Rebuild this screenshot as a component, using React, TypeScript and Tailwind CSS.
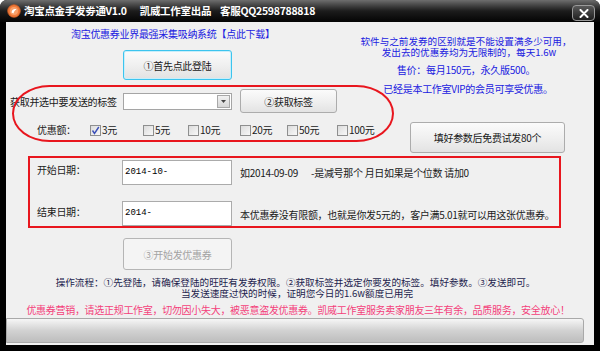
import React from "react";

const FONT = {
  fontFamily: '"Noto Sans CJK SC", "Noto Sans", "Liberation Sans", sans-serif',
};

const amounts = [
  { label: "3元", checked: true, w: "w-[53px]" },
  { label: "5元", checked: false, w: "w-[45px]" },
  { label: "10元", checked: false, w: "w-[52px]" },
  { label: "20元", checked: false, w: "w-[47px]" },
  { label: "50元", checked: false, w: "w-[50px]" },
  { label: "100元", checked: false, w: "w-[44px]" },
];

function CheckBox({ checked }: { checked: boolean }) {
  return (
    <div className="w-[11px] h-[11px] border border-[#8e8f8f] bg-gradient-to-br from-[#dcdcdc] to-[#f8f8f8] flex items-center justify-center shrink-0">
      {checked && (
        <svg width="9" height="9" viewBox="0 0 9 9">
          <path d="M1.5 4.5 L3.5 7.5 L7.8 1" stroke="#3b4fb8" strokeWidth="1.4" fill="none" />
        </svg>
      )}
    </div>
  );
}

const MONO = { fontFamily: '"Liberation Mono", "DejaVu Sans Mono", monospace' };

export default function App() {
  return (
    <div
      className="w-[600px] h-[351px] bg-black rounded-t-[7px] flex flex-col overflow-hidden"
      style={FONT}
    >
      {/* Title bar */}
      <div className="h-[22px] shrink-0 flex items-center pl-[7px] pr-[5px] bg-gradient-to-b from-[#6e6e6e] via-[#1c1c1c] to-[#050505]">
        <svg width="14" height="14" viewBox="0 0 14 14" className="shrink-0">
          <circle cx="7" cy="7" r="6.3" fill="#f07a3a" stroke="#c85a22" strokeWidth="0.8" />
          <circle cx="7" cy="7" r="4" fill="#f7a06a" />
          <path d="M4.5 8.5 C5 5, 8 4.5, 9.5 5.5 C8 6, 7 7.5, 6.5 9.5 Z" fill="#ffffff" />
        </svg>
        <span className="ml-[3px] text-white font-bold text-[10.5px] leading-[12px] tracking-[-0.3px] whitespace-nowrap">
          淘宝点金手发劵通V1.0
        </span>
        <span className="ml-[13px] text-white font-bold text-[10.5px] leading-[12px] tracking-[-0.3px] whitespace-nowrap">
          凯威工作室出品
        </span>
        <span className="ml-[9px] text-white font-bold text-[10.5px] leading-[12px] tracking-[-0.3px] whitespace-nowrap">
          客服QQ2598788818
        </span>
        <div className="ml-auto mt-[4px] w-[23px] h-[16px] rounded-[4px] border border-[#9a9a9a] bg-gradient-to-b from-[#5a5a5a] to-[#202020] flex items-center justify-center">
          <svg width="10" height="9" viewBox="0 0 10 9">
            <path d="M1.5 1 L8.5 8 M8.5 1 L1.5 8" stroke="#ffffff" strokeWidth="2" strokeLinecap="round" />
          </svg>
        </div>
      </div>

      {/* Client area */}
      <div className="mx-[6px] h-[323px] shrink-0 bg-[#f0f0f0] flex flex-col">
        {/* Top section */}
        <div className="flex h-[131px]">
          {/* Left column */}
          <div className="w-[340px] shrink-0 flex flex-col">
            <div className="mt-[6px] pl-[65px] text-[10px] leading-[12px] tracking-[-0.3px] text-[#2020e0] whitespace-nowrap">
              淘宝优惠券业界最强采集吸纳系统【点此下载】
            </div>
            <div className="mt-[10px] ml-[117px] w-[109px] h-[30px] rounded-[3px] border border-[#3cc4ee] bg-gradient-to-b from-[#fbfbfb] via-[#f0f0f0] to-[#e2e2e2] flex items-center justify-center text-[10px] tracking-[-0.3px] text-[#1a1a1a] shadow-[inset_0_0_0_1px_#c8eefa]">
              ①首先点此登陆
            </div>
            {/* Ellipse region */}
            <div className="relative mt-[5px] ml-[4px] w-[384px] h-[57px] pt-[4px]">
              <div className="flex items-center h-[24px]">
                <div className="w-[113px] text-[10px] tracking-[-0.3px] text-[#1a1a1a] whitespace-nowrap">
                  获取并选中要发送的标签
                </div>
                <div className="w-[109px] h-[17px] border border-[#a5a5a5] bg-white flex items-center justify-end pr-[1px]">
                  <div className="w-[13px] h-[13px] border border-[#a8a8a8] bg-gradient-to-b from-[#f2f2f2] to-[#d6d6d6] flex items-center justify-center">
                    <svg width="5" height="3" viewBox="0 0 5 3">
                      <path d="M0 0 L5 0 L2.5 3 Z" fill="#444" />
                    </svg>
                  </div>
                </div>
                <div className="ml-[8px] w-[97px] h-[24px] rounded-[3px] border border-[#acacac] bg-gradient-to-b from-[#fbfbfb] via-[#f0f0f0] to-[#e3e3e3] flex items-center justify-center text-[10px] tracking-[-0.3px] text-[#1a1a1a]">
                  ②获取标签
                </div>
              </div>
              <div className="mt-[11px] flex items-center h-[12px] pl-[27px]">
                <div className="w-[53px] text-[10px] leading-[12px] tracking-[-0.3px] text-[#1a1a1a] whitespace-nowrap">
                  优惠额：
                </div>
                {amounts.map((a) => (
                  <div key={a.label} className={`${a.w} flex items-center shrink-0`}>
                    <CheckBox checked={a.checked} />
                    <span className="ml-[1px] text-[10px] leading-[12px] tracking-[-0.3px] text-[#1a1a1a] whitespace-nowrap">
                      {a.label}
                    </span>
                  </div>
                ))}
              </div>
              <div className="absolute left-[2px] top-0 w-[382px] h-[57px] border-2 border-[#e8161e] rounded-[38px/29px] pointer-events-none" />
            </div>
          </div>
          {/* Right column */}
          <div className="flex-1 flex flex-col pr-[8px]">
            <div className="mt-[14px] text-center text-[9.6px] leading-[11px] text-[#2020e0] whitespace-nowrap">
              软件与之前发券的区别就是不能设置满多少可用，
            </div>
            <div className="text-center text-[9.6px] leading-[11px] text-[#2020e0] whitespace-nowrap pl-[6px]">
              发出去的优惠券均为无限制的，每天1.6w
            </div>
            <div className="mt-[7px] text-center text-[10px] leading-[10px] tracking-[-0.3px] text-[#2020e0] whitespace-nowrap">
              售价：每月150元，永久版500。
            </div>
            <div className="mt-[9px] text-center text-[10px] leading-[10px] tracking-[-0.3px] text-[#2020e0] whitespace-nowrap pl-[4px]">
              已经是本工作室VIP的会员可享受优惠。
            </div>
            <div className="mt-[28px] ml-[64px] w-[155px] h-[31px] rounded-[3px] border border-[#acacac] bg-gradient-to-b from-[#fbfbfb] via-[#f0f0f0] to-[#e3e3e3] flex items-center justify-center text-[10px] tracking-[-0.3px] text-[#1a1a1a] whitespace-nowrap">
              填好参数后免费试发80个
            </div>
          </div>
        </div>

        {/* Date box */}
        <div className="mt-[3px] ml-[22px] w-[533px] h-[72px] border-2 border-[#e8161e] flex flex-col pl-[7px]">
          <div className="mt-[2px] flex items-start h-[25px]">
            <div className="mt-[4px] w-[85px] text-[10px] leading-[12px] tracking-[-0.3px] text-[#1a1a1a]">开始日期：</div>
            <div className="w-[110px] h-[25px] border border-[#ababab] bg-white flex items-center pl-[2px] text-black" style={MONO}>
              <span className="text-[9px]">2014-10-</span>
            </div>
            <div className="mt-[7px] ml-[8px] text-[10px] leading-[12px] tracking-[-0.3px] text-[#1a1a1a] whitespace-nowrap">
              如2014-09-09
            </div>
            <div className="mt-[7px] ml-[13px] text-[10px] leading-[12px] tracking-[-0.3px] text-[#1a1a1a] whitespace-nowrap">
              -是减号那个 月日如果是个位数 请加0
            </div>
          </div>
          <div className="mt-[16px] flex items-start h-[25px]">
            <div className="mt-[5px] w-[85px] text-[10px] leading-[12px] tracking-[-0.3px] text-[#1a1a1a]">结束日期：</div>
            <div className="w-[110px] h-[25px] border border-[#ababab] bg-white flex items-center pl-[2px] text-black" style={MONO}>
              <span className="text-[9px]">2014-</span>
            </div>
            <div className="mt-[8px] ml-[8px] text-[10px] leading-[12px] tracking-[-0.3px] text-[#1a1a1a] whitespace-nowrap">
              本优惠券没有限额，也就是你发5元的，客户满5.01就可以用这张优惠券。
            </div>
          </div>
        </div>

        {/* Start button (disabled) */}
        <div className="mt-[10px] ml-[117px] w-[109px] h-[32px] rounded-[3px] border border-[#b5b5b5] bg-[#f4f4f4] flex items-center justify-center text-[10px] tracking-[-0.3px] text-[#a3a3a3]">
          ③开始发优惠券
        </div>

        {/* Instructions */}
        <div className="mt-[7px] pr-[9px] text-center text-[9.6px] leading-[11px] text-[#1e1e4e] whitespace-nowrap">
          操作流程：①先登陆，请确保登陆的旺旺有发券权限。②获取标签并选定你要发的标签。填好参数。③发送即可。
        </div>
        <div className="pr-[6px] text-center text-[9.6px] leading-[11px] text-[#1e1e4e] whitespace-nowrap">
          当发送速度过快的时候，证明您今日的1.6w额度已用完
        </div>
        <div className="mt-[5px] pr-[4px] text-center text-[10px] leading-[12px] tracking-[-0.3px] text-[#f4417b] whitespace-nowrap">
          优惠券营销，请选正规工作室，切勿因小失大，被恶意盗发优惠券。凯威工作室服务卖家朋友三年有余，品质服务，安全放心！
        </div>

        {/* Bottom bar */}
        <div className="mt-[2px] w-[578px] h-[25px] rounded-r-[3px] border border-[#a9a9a9] bg-gradient-to-b from-[#f6f6f6] via-[#d2d2d2] to-[#bdbdbd]" />
      </div>
    </div>
  );
}
